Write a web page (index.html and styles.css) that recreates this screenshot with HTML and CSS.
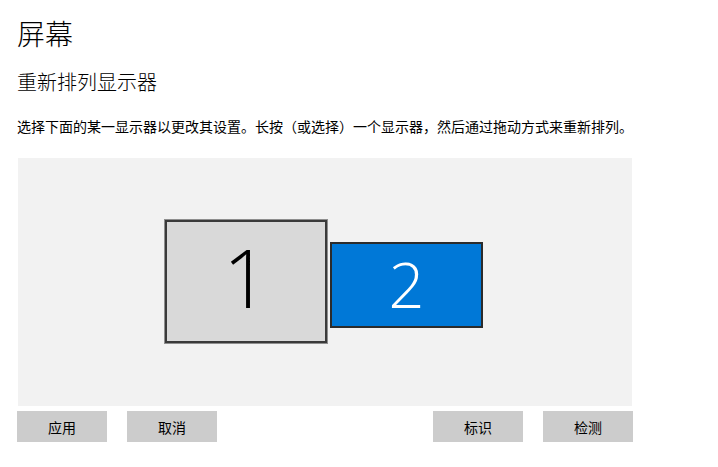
FILE: index.html
```html
<!DOCTYPE html>
<html lang="zh-CN">
<head>
<meta charset="utf-8">
<link rel="stylesheet" href="styles.css">
</head>
<body>
<div class="page">
  <h1 class="title">屏幕</h1>
  <h2 class="subtitle">重新排列显示器</h2>
  <p class="desc">选择下面的某一显示器以更改其设置。长按（或选择）一个显示器，然后通过拖动方式来重新排列。</p>
  <div class="canvas">
    <div class="monitor m1"><span>1</span></div>
    <div class="monitor m2"><span>2</span></div>
  </div>
  <div class="actions">
    <div class="group">
      <button class="btn">应用</button>
      <button class="btn">取消</button>
    </div>
    <div class="group">
      <button class="btn">标识</button>
      <button class="btn">检测</button>
    </div>
  </div>
</div>
</body>
</html>
```
FILE: styles.css
```css
html, body {
  margin: 0;
  padding: 0;
  background: #ffffff;
}
body {
  font-family: "Noto Sans CJK SC", "Noto Sans", sans-serif;
  color: #000;
}
.page {
  padding: 0 0 0 17px;
  width: 616px;
}
.title {
  margin: 0;
  padding-top: 18px;
  font-size: 28px;
  line-height: 30px;
  font-weight: 300;
}
.subtitle {
  margin: 0;
  padding-top: 22px;
  font-size: 20px;
  line-height: 24px;
  font-weight: 300;
}
.desc {
  margin: 0;
  padding-top: 22px;
  font-size: 14px;
  line-height: 20px;
  white-space: nowrap;
}
.canvas {
  position: relative;
  margin: 22px 0 0 1px;
  width: 614px;
  height: 248px;
  background: #f2f2f2;
}
.monitor {
  position: absolute;
  box-sizing: border-box;
  display: flex;
  align-items: center;
  justify-content: center;
  font-family: "Open Sans", "Noto Sans", sans-serif;
  font-weight: 300;
}
.m1 {
  left: 147px;
  top: 62px;
  width: 162px;
  height: 123px;
  background: #d9d9d9;
  border: 2px solid #3a3a3a;
  box-shadow: 0 0 0 1px #8e8e8e;
  color: #000;
  font-size: 81px;
}
.m1 span {
  transform: translateY(-5px);
}
.m2 {
  left: 312px;
  top: 84px;
  width: 153px;
  height: 86px;
  background: #0078d7;
  border: 2px solid #2b2b2b;
  color: #fff;
  font-size: 63px;
}
.m2 span {
  transform: translateY(-2px);
}
.actions {
  display: flex;
  justify-content: space-between;
  margin-top: 5px;
  width: 616px;
}
.group {
  display: flex;
  gap: 20px;
}
.btn {
  width: 90px;
  height: 31px;
  border: none;
  background: #cccccc;
  font-family: "Noto Sans CJK SC", "Noto Sans", sans-serif;
  font-size: 14px;
  color: #000;
  padding: 0;
}
```
